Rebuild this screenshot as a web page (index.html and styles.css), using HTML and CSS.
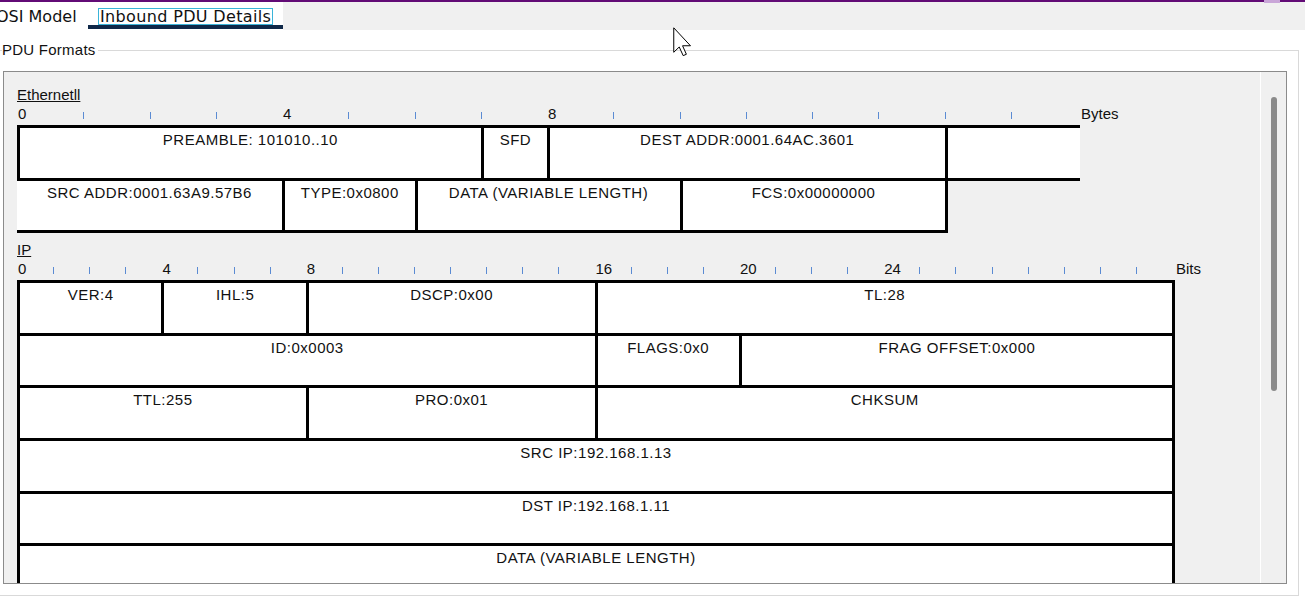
FILE: index.html
```html
<!DOCTYPE html>
<html>
<head>
<meta charset="utf-8">
<title>Inbound PDU Details</title>
<link rel="stylesheet" href="styles.css">
</head>
<body>
<div class="topline"><span class="topline-mark"></span></div>
<div class="tabstrip">
  <div class="tabs">
    <div class="tab tab-first"><span class="tab-label">OSI Model</span></div>
    <div class="tab tab-active"><span class="tab-label">Inbound PDU Details</span></div>
  </div>
</div>
<fieldset class="group">
  <legend class="group-title">PDU Formats</legend>
  <div class="scrollpane">
    <div class="viewport">
      <section class="pdu">
        <div class="pdu-name">Ethernetll</div>
        <div class="ruler ruler-bytes">
          <span class="mark">0</span><span class="tick"></span><span class="tick"></span><span class="tick"></span>
          <span class="mark">4</span><span class="tick"></span><span class="tick"></span><span class="tick"></span>
          <span class="mark">8</span><span class="tick"></span><span class="tick"></span><span class="tick"></span>
          <span class="tick"></span><span class="tick"></span><span class="tick"></span><span class="tick"></span>
          <span class="unit">Bytes</span>
        </div>
        <div class="fields fields-bytes">
          <div class="field s7">PREAMBLE: 101010..10</div>
          <div class="field s1">SFD</div>
          <div class="field s6">DEST ADDR:0001.64AC.3601</div>
          <div class="field s2 open-right"></div>
          <div class="field s4 open-left">SRC ADDR:0001.63A9.57B6</div>
          <div class="field s2">TYPE:0x0800</div>
          <div class="field s4">DATA (VARIABLE LENGTH)</div>
          <div class="field s4">FCS:0x00000000</div>
        </div>
      </section>
      <section class="pdu pdu-ip">
        <div class="pdu-name">IP</div>
        <div class="ruler ruler-bits">
          <span class="mark">0</span><span class="tick"></span><span class="tick"></span><span class="tick"></span>
          <span class="mark">4</span><span class="tick"></span><span class="tick"></span><span class="tick"></span>
          <span class="mark">8</span><span class="tick"></span><span class="tick"></span><span class="tick"></span>
          <span class="tick"></span><span class="tick"></span><span class="tick"></span><span class="tick"></span>
          <span class="mark">16</span><span class="tick"></span><span class="tick"></span><span class="tick"></span>
          <span class="mark">20</span><span class="tick"></span><span class="tick"></span><span class="tick"></span>
          <span class="mark">24</span><span class="tick"></span><span class="tick"></span><span class="tick"></span>
          <span class="tick"></span><span class="tick"></span><span class="tick"></span><span class="tick"></span>
          <span class="unit">Bits</span>
        </div>
        <div class="fields fields-bits">
          <div class="field s4">VER:4</div>
          <div class="field s4">IHL:5</div>
          <div class="field s8">DSCP:0x00</div>
          <div class="field s16">TL:28</div>
          <div class="field s16">ID:0x0003</div>
          <div class="field s4">FLAGS:0x0</div>
          <div class="field s12">FRAG OFFSET:0x000</div>
          <div class="field s8">TTL:255</div>
          <div class="field s8">PRO:0x01</div>
          <div class="field s16">CHKSUM</div>
          <div class="field s32">SRC IP:192.168.1.13</div>
          <div class="field s32">DST IP:192.168.1.11</div>
          <div class="field s32">DATA (VARIABLE LENGTH)</div>
        </div>
      </section>
    </div>
    <div class="scrollbar"><div class="thumb"></div></div>
  </div>
</fieldset>
<svg class="cursor" width="19" height="29" viewBox="0 0 12.5 19" aria-hidden="true">
  <path d="M0.5,0.5 V16.6 L4.1,13.1 L6.7,18.8 L8.8,17.9 L6.3,12.3 H11.5 Z" fill="#fff" stroke="#000" stroke-width="1" vector-effect="non-scaling-stroke" stroke-linejoin="miter"/>
</svg>
</body>
</html>
```

FILE: styles.css
```css
* { box-sizing: border-box; }

html, body {
  margin: 0;
  padding: 0;
}

body {
  width: 1305px;
  height: 601px;
  overflow: hidden;
  position: relative;
  background: #ffffff;
  color: #111111;
  font-family: "Liberation Sans", Arial, sans-serif;
}

/* top accent line */
.topline {
  height: 2px;
  background: #620b76;
  position: relative;
}
.topline-mark {
  position: absolute;
  left: 1264px;
  top: 0;
  width: 16px;
  height: 3px;
  background: #c9a6d8;
}

/* tabs */
.tabstrip {
  height: 28px;
  background: #f0f0f0;
  display: flex;
}
.tabs {
  display: flex;
  background: #ffffff;
  height: 100%;
}
.tab {
  font-family: "DejaVu Sans", sans-serif;
  font-size: 16px;
  line-height: 15px;
  color: #111111;
  padding-top: 6px;
}
.tab-label {
  display: inline-block;
  border: 1px solid transparent;
  padding: 0 1px;
}
.tab-first {
  width: 93px;
  margin-left: -5px;
}
.tab-first .tab-label {
  padding: 0;
}
.tab-active {
  padding: 6px 10px 0;
  border-bottom: 4px solid #0f2848;
  margin-bottom: 1px;
}
.tab-active .tab-label {
  border-color: #3ab4d9;
  letter-spacing: 0.35px;
}

/* group box */
.group {
  margin: 12px 0 0 -3px;
  width: 1302px;
  padding: 0;
  border: 1px solid #d9d9d9;
  min-width: 0;
}
.group-title {
  margin-left: 4px;
  padding: 0 2px 0 0;
  font-size: 15px;
  line-height: 16px;
  letter-spacing: 0.25px;
  color: #111111;
}

/* scroll pane */
.scrollpane {
  display: flex;
  height: 513px;
  margin: 13px 11px 11px 5px;
  border: 1px solid #8b8b8b;
  background: #f0f0f0;
}
.viewport {
  flex: 1;
  min-width: 0;
  overflow: hidden;
  padding: 15px 0 0 13px;
}
.scrollbar {
  flex: none;
  width: 26px;
  border-left: 1px solid #ffffff;
}
.thumb {
  width: 6px;
  height: 294px;
  margin: 25px 0 0 10px;
  background: #8a8a8a;
  border-radius: 3px;
}

/* PDU sections */
.pdu-name {
  height: 19px;
  font-size: 15px;
  line-height: 16px;
  text-decoration: underline;
  text-underline-offset: 1px;
}
.pdu-ip {
  margin-top: 11.5px;
}

.ruler {
  display: grid;
  height: 19px;
  font-size: 15px;
  line-height: 16px;
}
.ruler-bytes { grid-template-columns: repeat(16, 66.25px) auto; }
.ruler-bits { grid-template-columns: repeat(32, 36.1px) auto; }

.mark { padding-left: 1px; }
.tick {
  align-self: end;
  height: 7px;
  margin-bottom: 6px;
  border-left: 1px solid #5b8bd3;
}
.unit {
  padding-left: 4px;
  white-space: nowrap;
}

.fields {
  display: grid;
  grid-auto-rows: 52.7px;
}
.fields-bytes {
  grid-template-columns: repeat(16, 66.25px);
  width: 1060px;
}
.fields-bits {
  grid-template-columns: repeat(32, 36.1px);
  width: 1155.2px;
}

.field {
  background: #ffffff;
  border: 3px solid #000000;
  margin: 0 -3px -3px 0;
  padding-top: 4px;
  text-align: center;
  font-size: 15px;
  line-height: 16px;
  letter-spacing: 0.5px;
  white-space: nowrap;
  color: #111111;
}
.open-right { border-right: 0; }
.open-left { border-left: 0; }

.s1 { grid-column: span 1; }
.s2 { grid-column: span 2; }
.s4 { grid-column: span 4; }
.s6 { grid-column: span 6; }
.s7 { grid-column: span 7; }
.s8 { grid-column: span 8; }
.s12 { grid-column: span 12; }
.s16 { grid-column: span 16; }
.s32 { grid-column: span 32; }

/* mouse pointer captured in the screenshot */
.cursor {
  position: absolute;
  left: 673px;
  top: 27px;
}
```
